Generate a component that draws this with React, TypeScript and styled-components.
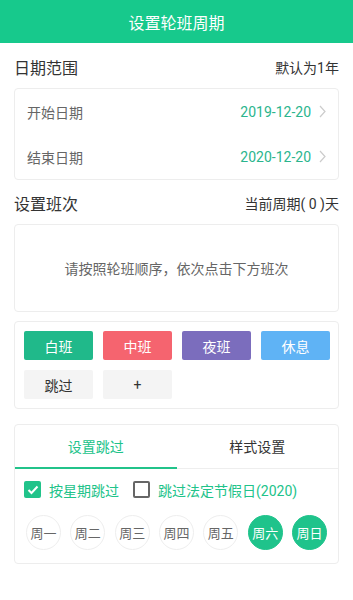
import styled, { createGlobalStyle } from 'styled-components';

const GlobalStyle = createGlobalStyle`
  * { box-sizing: border-box; }
  body {
    margin: 0;
    background: #fff;
    font-family: Roboto, "Noto Sans CJK SC", sans-serif;
    color: #333;
  }
`;

const Page = styled.div`
  width: 353px;
  min-height: 600px;
  background: #fff;
`;

const Header = styled.div`
  height: 43px;
  background: #17c98c;
  color: #fff;
  font-size: 16px;
  display: flex;
  align-items: center;
  justify-content: center;
`;

const Body = styled.div`
  padding: 0 14px;
`;

const SectionHead = styled.div<{ $h?: number }>`
  height: ${(p) => p.$h ?? 45}px;
  display: flex;
  align-items: center;
  justify-content: space-between;
  padding-top: 2px;
`;

const SectionTitle = styled.span`
  font-size: 16px;
  color: #333;
`;

const SectionNote = styled.span`
  font-size: 14px;
  color: #333;
`;

const Card = styled.div<{ $mt?: number }>`
  border: 1px solid #ededed;
  border-radius: 4px;
  background: #fff;
  margin-top: ${(p) => p.$mt ?? 0}px;
`;

const DateRow = styled.div`
  height: 45px;
  display: flex;
  align-items: center;
  padding: 0 12px;
  font-size: 14px;
`;

const DateLabel = styled.span`
  flex: 1;
  color: #666;
`;

const DateValue = styled.span`
  color: #2bb58d;
  margin-right: 8px;
`;

const Hint = styled.div`
  height: 86px;
  display: flex;
  align-items: center;
  justify-content: center;
  font-size: 14px;
  color: #666;
`;

const ShiftGrid = styled.div`
  display: grid;
  grid-template-columns: repeat(4, 69px);
  gap: 10px;
  padding: 9px;
  justify-content: space-between;
`;

const ShiftButton = styled.div<{ $bg: string; $fg: string }>`
  height: 29px;
  border-radius: 2px;
  background: ${(p) => p.$bg};
  color: ${(p) => p.$fg};
  font-size: 14px;
  display: flex;
  align-items: center;
  justify-content: center;
`;

const Tabs = styled.div`
  display: flex;
  height: 44px;
  border-bottom: 1px solid #eee;
`;

const Tab = styled.div<{ $active?: boolean }>`
  flex: 1;
  display: flex;
  align-items: center;
  justify-content: center;
  font-size: 14px;
  color: ${(p) => (p.$active ? '#21c38a' : '#333')};
  border-bottom: 2px solid ${(p) => (p.$active ? '#21c38a' : 'transparent')};
  margin-bottom: -1px;
`;

const CheckRow = styled.div`
  display: flex;
  align-items: center;
  height: 41px;
  padding: 0 9px;
  gap: 14px;
`;

const Check = styled.label`
  display: flex;
  align-items: center;
  gap: 8px;
  font-size: 14px;
  color: #21c38a;
`;

const Box = styled.span<{ $on?: boolean }>`
  width: 17px;
  height: 17px;
  border-radius: 2px;
  display: flex;
  align-items: center;
  justify-content: center;
  background: ${(p) => (p.$on ? '#21c38a' : '#fff')};
  border: ${(p) => (p.$on ? 'none' : '2px solid #666')};
`;

const Weeks = styled.div`
  display: flex;
  justify-content: space-between;
  padding: 5px 11px 13px 11px;
`;

const Day = styled.div<{ $on?: boolean }>`
  width: 35px;
  height: 35px;
  border-radius: 50%;
  display: flex;
  align-items: center;
  justify-content: center;
  font-size: 13px;
  background: ${(p) => (p.$on ? '#1fc38b' : '#fff')};
  color: ${(p) => (p.$on ? '#fff' : '#666')};
  border: 1px solid ${(p) => (p.$on ? '#1fc38b' : '#eee')};
`;

const Chevron = () => (
  <svg width="7" height="13" viewBox="0 0 7 13">
    <path d="M1 1l5 5.5-5 5.5" fill="none" stroke="#ccc" strokeWidth="1.2" />
  </svg>
);

const shifts = [
  { name: '白班', bg: '#20b98a', fg: '#fff' },
  { name: '中班', bg: '#f5646f', fg: '#fff' },
  { name: '夜班', bg: '#7b6dbd', fg: '#fff' },
  { name: '休息', bg: '#5fb3f5', fg: '#fff' },
  { name: '跳过', bg: '#f4f4f4', fg: '#333' },
  { name: '+', bg: '#f4f4f4', fg: '#333' },
];

const days = ['周一', '周二', '周三', '周四', '周五', '周六', '周日'];

const App = () => {
  return (
    <Page>
      <GlobalStyle />
      <Header>设置轮班周期</Header>
      <Body>
        <SectionHead>
          <SectionTitle>日期范围</SectionTitle>
          <SectionNote>默认为1年</SectionNote>
        </SectionHead>
        <Card>
          <DateRow>
            <DateLabel>开始日期</DateLabel>
            <DateValue>2019-12-20</DateValue>
            <Chevron />
          </DateRow>
          <DateRow>
            <DateLabel>结束日期</DateLabel>
            <DateValue>2020-12-20</DateValue>
            <Chevron />
          </DateRow>
        </Card>
        <SectionHead $h={44}>
          <SectionTitle>设置班次</SectionTitle>
          <SectionNote>当前周期( 0 )天</SectionNote>
        </SectionHead>
        <Card>
          <Hint>请按照轮班顺序，依次点击下方班次</Hint>
        </Card>
        <Card $mt={9}>
          <ShiftGrid>
            {shifts.map((s) => (
              <ShiftButton key={s.name} $bg={s.bg} $fg={s.fg}>
                {s.name}
              </ShiftButton>
            ))}
          </ShiftGrid>
        </Card>
        <Card $mt={15}>
          <Tabs>
            <Tab $active>设置跳过</Tab>
            <Tab>样式设置</Tab>
          </Tabs>
          <CheckRow>
            <Check>
              <Box $on>
                <svg width="12" height="10" viewBox="0 0 12 10">
                  <path d="M1.5 5l3 3 6-6.5" fill="none" stroke="#fff" strokeWidth="2" />
                </svg>
              </Box>
              按星期跳过
            </Check>
            <Check>
              <Box />
              跳过法定节假日(2020)
            </Check>
          </CheckRow>
          <Weeks>
            {days.map((d, i) => (
              <Day key={d} $on={i >= 5}>
                {d}
              </Day>
            ))}
          </Weeks>
        </Card>
      </Body>
    </Page>
  );
};

export default App;
